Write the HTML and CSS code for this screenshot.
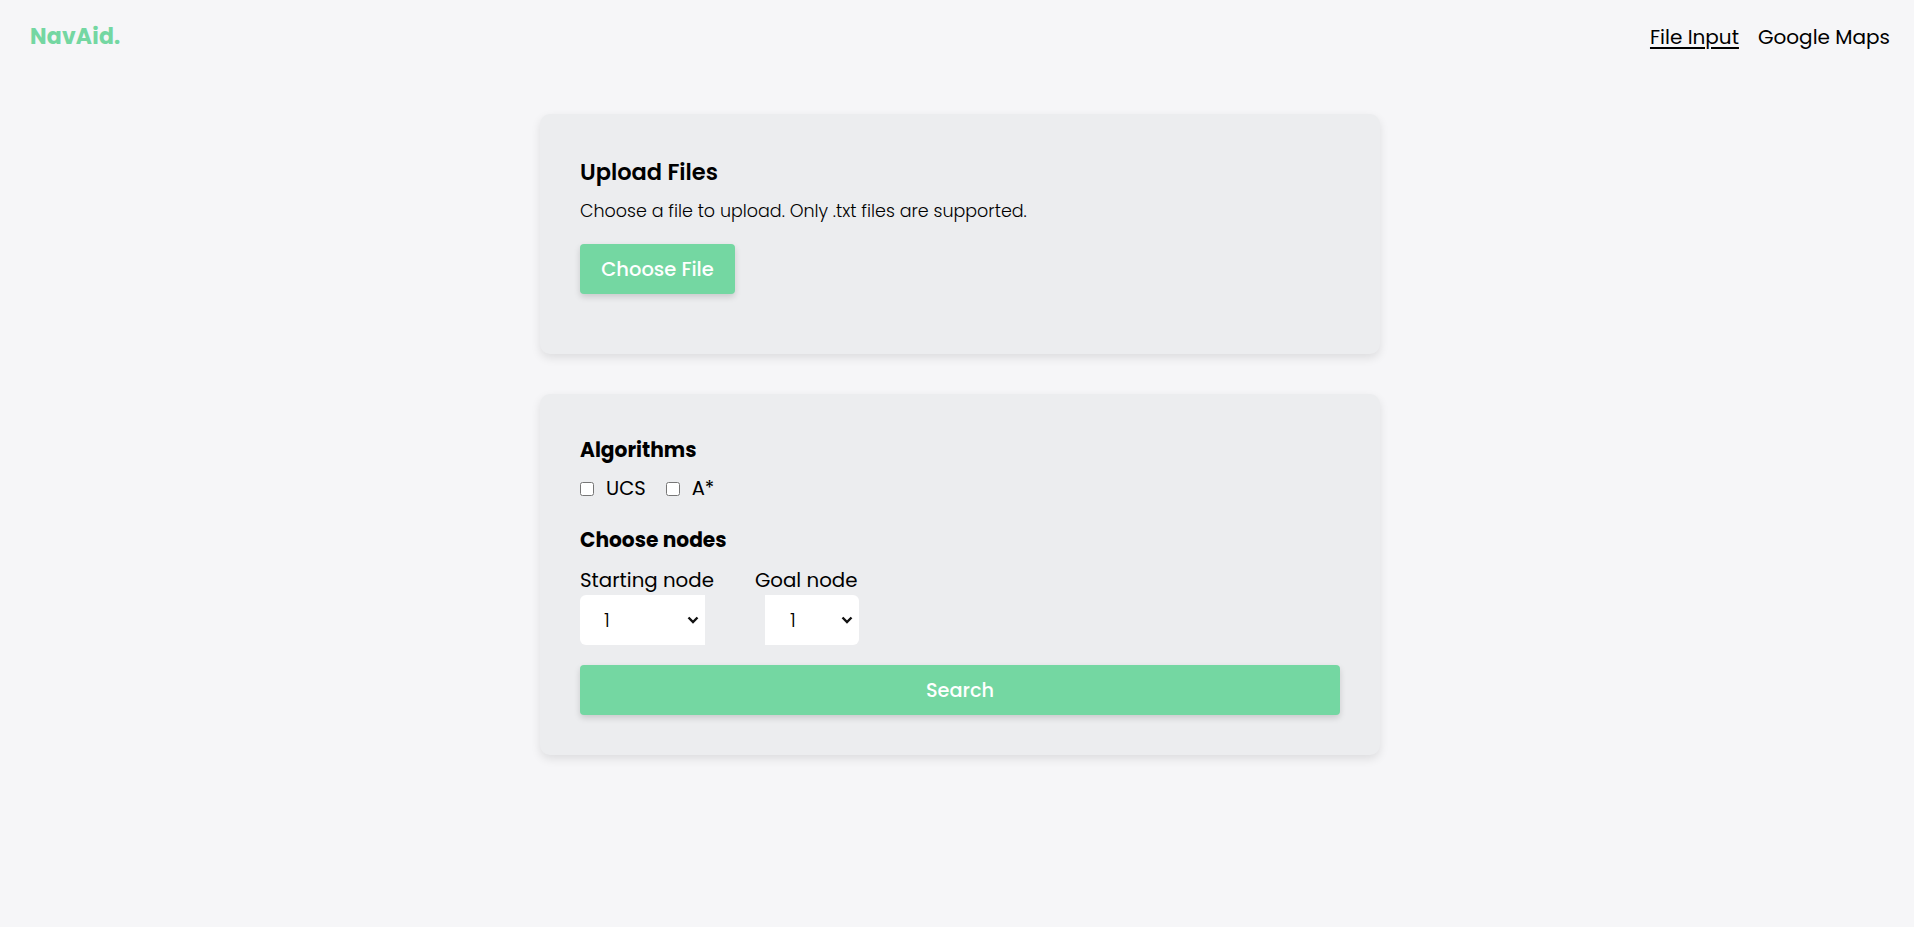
FILE: index.html
```html
<!DOCTYPE html>
<html lang="en">
<head>
<meta charset="utf-8">
<title>NavAid</title>
<link rel="stylesheet" href="styles.css">
</head>
<body>
<header class="topbar">
  <div class="logo">NavAid.</div>
  <nav class="nav">
    <a class="nav-link active" href="#">File Input</a>
    <a class="nav-link" href="#">Google Maps</a>
  </nav>
</header>
<main class="main">
  <section class="card upload">
    <h2 class="card-title">Upload Files</h2>
    <p class="card-desc">Choose a file to upload. Only .txt files are supported.</p>
    <button class="btn choose">Choose File</button>
  </section>
  <section class="card options">
    <h3 class="section-title">Algorithms</h3>
    <div class="checks">
      <label class="check"><input type="checkbox"><span>UCS</span></label>
      <label class="check"><input type="checkbox"><span>A*</span></label>
    </div>
    <h3 class="section-title nodes-title">Choose nodes</h3>
    <div class="nodes">
      <div class="node-field">
        <span class="node-label">Starting node</span>
        <div class="select start"><span class="val">1</span><svg class="chev" viewBox="0 0 12 8" width="12" height="8"><path d="M1.5 1.5 L6 6 L10.5 1.5" fill="none" stroke="#111" stroke-width="2.4"/></svg></div>
      </div>
      <div class="node-field">
        <span class="node-label">Goal node</span>
        <div class="select goal"><span class="val">1</span><svg class="chev" viewBox="0 0 12 8" width="12" height="8"><path d="M1.5 1.5 L6 6 L10.5 1.5" fill="none" stroke="#111" stroke-width="2.4"/></svg></div>
      </div>
    </div>
    <button class="btn search">Search</button>
  </section>
</main>
</body>
</html>
```
FILE: styles.css
```css
* { box-sizing: border-box; }
html, body { margin: 0; padding: 0; }
body {
  background: #f6f6f8;
  font-family: "Poppins", "Open Sans", "DejaVu Sans", sans-serif;
  color: #000;
  min-height: 927px;
}
.topbar {
  display: flex;
  justify-content: space-between;
  align-items: baseline;
  padding: 22px 24px 0 30px;
}
.logo {
  color: #74d7a2;
  font-weight: 700;
  font-size: 22px;
  line-height: 30px;
  letter-spacing: 0.2px;
}
.nav { display: flex; gap: 19px; }
.nav-link {
  color: #000;
  text-decoration: none;
  font-size: 20px;
  line-height: 30px;
}
.nav-link.active { text-decoration: underline; text-underline-offset: 3px; }
.main {
  display: flex;
  flex-direction: column;
  align-items: center;
  gap: 40px;
  padding-top: 62px;
  padding-left: 6px;
}
.card {
  width: 840px;
  background: #ecedef;
  border-radius: 10px;
  padding: 40px;
  box-shadow: 0 4px 10px rgba(0,0,0,0.10);
}
.upload { height: 240px; }
.options { height: 361px; }
.card-title {
  margin: 0;
  font-size: 22.5px;
  font-weight: 600;
  line-height: 36px;
}
.card-desc {
  margin: 8px 0 20px;
  font-size: 17.5px;
  font-weight: 300;
  line-height: 26px;
}
.btn {
  display: block;
  border: none;
  background: #74d7a2;
  color: #fff;
  font-family: inherit;
  font-weight: 500;
  border-radius: 4px;
  box-shadow: 0 3px 6px rgba(0,0,0,0.15);
  height: 50px;
  padding: 0;
}
.choose { width: 155px; font-size: 19.5px; }
.section-title {
  margin: 0;
  font-size: 20.2px;
  font-weight: 700;
  line-height: 32px;
}
.checks { display: flex; gap: 20px; margin: 8px 0 20px; }
.check { display: flex; align-items: center; gap: 12px; font-size: 19.5px; line-height: 30px; }
.check input { margin: 0; width: 14px; height: 14px; }
.nodes { display: flex; gap: 41px; margin-top: 9px; }
.node-field { display: flex; flex-direction: column; }
.node-label { font-size: 19.8px; line-height: 30px; }
.select {
  display: flex;
  align-items: center;
  justify-content: space-between;
  background: #fff;
  height: 50px;
  font-size: 20px;
}
.select .val { font-weight: 300; }
.start { width: 125px; border-radius: 6px 0 0 6px; padding: 0 6px 0 24px; }
.goal { width: 94px; border-radius: 0 6px 6px 0; padding: 0 6px 0 25px; margin-left: 10px; }
.search { width: 100%; margin-top: 20px; font-size: 19.3px; }
```
